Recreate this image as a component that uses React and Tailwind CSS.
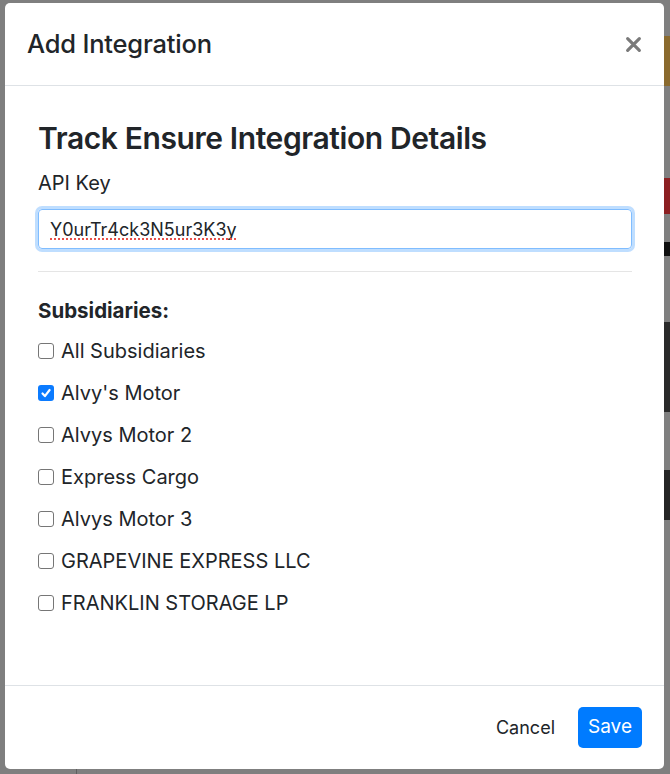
import React, { useState } from 'react';

const subsidiaries = [
  { name: 'All Subsidiaries', checked: false },
  { name: "Alvy's Motor", checked: true },
  { name: 'Alvys Motor 2', checked: false },
  { name: 'Express Cargo', checked: false },
  { name: 'Alvys Motor 3', checked: false },
  { name: 'GRAPEVINE EXPRESS LLC', checked: false },
  { name: 'FRANKLIN STORAGE LP', checked: false },
];

const Checkbox = ({ checked }) =>
  checked ? (
    <span className="w-[16px] h-[16px] shrink-0 rounded-[3px] bg-[#0b7bff] flex items-center justify-center">
      <svg className="w-[12px] h-[12px]" viewBox="0 0 12 12" fill="none" stroke="white" strokeWidth={2.2} strokeLinecap="round" strokeLinejoin="round">
        <path d="M2.5 6.5l2.4 2.6L9.6 3" />
      </svg>
    </span>
  ) : (
    <span className="w-[16px] h-[16px] shrink-0 rounded-[3px] border border-[#767676] bg-white"></span>
  );

const App = () => {
  const [apiKey, setApiKey] = useState('Y0urTr4ck3N5ur3K3y');

  return (
    <div className="w-[670px] h-[774px] bg-[#7f7f7f] relative overflow-hidden font-['Inter','Liberation_Sans',sans-serif] text-[#212529]">
      {/* page peeking behind the backdrop */}
      <div className="absolute right-0 top-[36px] w-[6px] h-[50px] bg-[#8a6a2e]"></div>
      <div className="absolute right-0 top-[178px] w-[6px] h-[36px] bg-[#8c1f22]"></div>
      <div className="absolute right-0 top-[242px] w-[6px] h-[14px] bg-[#0f0f0f]"></div>
      <div className="absolute right-0 top-[322px] w-[6px] h-[90px] bg-[#2a2a2a]"></div>
      <div className="absolute right-0 top-[470px] w-[6px] h-[50px] bg-[#262626]"></div>
      <div className="absolute left-[76px] top-[769px] w-px h-[5px] bg-[#5f5f5f]"></div>

      <div className="pl-[5px] pt-[3px]">
        <div className="w-[659px] h-[766px] bg-white rounded-[5px] flex flex-col">
          {/* Header */}
          <div className="h-[83px] shrink-0 border-b border-[#dee2e6] flex items-center justify-between pl-[22px] pr-[22px]">
            <h5 className="text-[25.5px] leading-none font-medium tracking-[-0.2px]">Add Integration</h5>
            <button className="text-[#7a7a7a]">
              <svg className="w-[17px] h-[17px]" viewBox="0 0 16 16" fill="none" stroke="currentColor" strokeWidth={3} strokeLinecap="round">
                <path d="M2.5 2.5l11 11M13.5 2.5l-11 11" />
              </svg>
            </button>
          </div>

          {/* Body */}
          <div className="flex-1 pl-[33px] pr-[32px] pt-[35px]">
            <h3 className="text-[30px] leading-[34px] font-semibold tracking-[-0.4px]">Track Ensure Integration Details</h3>
            <label className="block mt-[16px] text-[20px] leading-[24px]">API Key</label>
            <div className="relative mt-[14px]">
              <input
                value={apiKey}
                onChange={(e) => setApiKey(e.target.value)}
                spellCheck={false}
                className="w-full h-[40px] rounded-[4px] border border-[#80bdff] shadow-[0_0_0_3px_rgba(0,123,255,0.25)] px-[11px] text-[18px] outline-none"
              />
              {/* spellcheck squiggle */}
              <span className="absolute left-[12px] top-[29px] w-[186px] border-b-2 border-dotted border-[#e8504a] pointer-events-none"></span>
            </div>
            <hr className="mt-[22px] border-t border-[#e5e5e5]" />
            <div className="mt-[27px] text-[20.5px] leading-[24px] font-bold">Subsidiaries:</div>
            <div className="mt-[7px] flex flex-col">
              {subsidiaries.map((s) => (
                <label key={s.name} className="h-[42px] flex items-center gap-[7px] text-[20px]">
                  <Checkbox checked={s.checked} />
                  <span>{s.name}</span>
                </label>
              ))}
            </div>
          </div>

          {/* Footer */}
          <div className="h-[84px] shrink-0 border-t border-[#dee2e6] flex items-center justify-end gap-[23px] pr-[22px]">
            <button className="text-[18px]">Cancel</button>
            <button className="w-[64px] h-[41px] rounded-[5px] bg-[#007bff] text-white text-[19px]">Save</button>
          </div>
        </div>
      </div>
    </div>
  );
};

export default App;
